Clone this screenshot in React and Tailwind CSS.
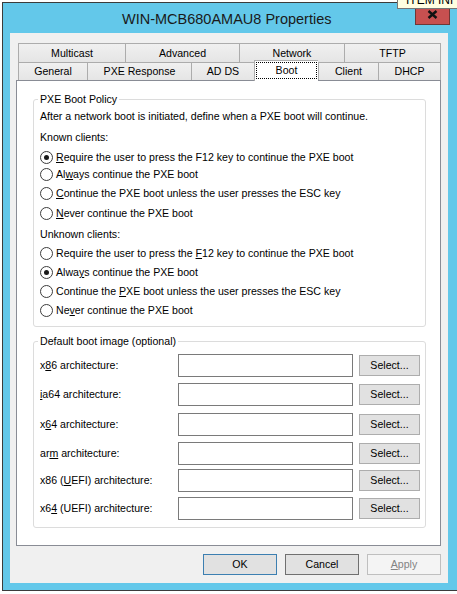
function Radio({ checked }) {
  return (
    <span className="w-[13px] h-[13px] shrink-0 rounded-full border border-[#3c3c3c] bg-white flex items-center justify-center">
      {checked && <span className="w-[5px] h-[5px] rounded-full bg-[#1a1a1a]" />}
    </span>
  );
}

function RadioRow({ checked, className, children }) {
  return (
    <div className={`h-[17px] flex items-center gap-[3px] ${className}`}>
      <Radio checked={checked} />
      <span>{children}</span>
    </div>
  );
}

function Tab({ w, last, children }) {
  return (
    <div
      className={`${w} h-full border-l border-t border-[#acacac] ${last ? 'border-r' : ''} bg-gradient-to-b from-[#f0f0f0] to-[#e5e5e5] flex items-center justify-center`}
    >
      {children}
    </div>
  );
}

function ImageRow({ className, children }) {
  return (
    <div className={`h-[23px] flex items-center ${className}`}>
      <div className="w-[144px] pl-[6px]">{children}</div>
      <div className="w-[175px] h-[23px] border border-[#7a7a7a] bg-white" />
      <button className="ml-[6px] w-[61px] h-[21px] border border-[#adadad] bg-[#e1e1e1] flex items-center justify-center">
        Select...
      </button>
    </div>
  );
}

export default function App() {
  return (
    <div className="relative w-[457px] h-[594px] overflow-hidden bg-white font-['Liberation_Sans',Arial,sans-serif] text-[10.6px] leading-none text-black">
      <div className="ml-[2px] mt-[2px] w-[470px] h-[589px] border border-[#3b3b3b] bg-[#63c8ea] flex flex-col">
        {/* title bar */}
        <div className="relative h-[30px] shrink-0 flex items-center">
          <span className="ml-[119px] pt-[2px] text-[14.5px] text-[#1a1a1a]">WIN-MCB680AMAU8 Properties</span>
          <div className="absolute top-[-1px] left-[412px] w-[35px] h-[23px] bg-[#c75050] border border-[#6e3737] flex items-center justify-center">
            <svg width="11" height="9" viewBox="0 0 11 9" className="mt-[1px]">
              <path d="M1.5 1 L9.5 8 M9.5 1 L1.5 8" stroke="#111" strokeWidth="2.4" fill="none" />
            </svg>
          </div>
        </div>

        {/* client area */}
        <div className="ml-[7px] mb-[7px] w-[438px] flex-1 bg-[#f0f0f0] flex flex-col pt-[10px] pl-[6px]">
          <div className="ml-[2px] h-[19px] flex">
            <Tab w="w-[107px]">Multicast</Tab>
            <Tab w="w-[114px]">Advanced</Tab>
            <Tab w="w-[105px]">Network</Tab>
            <Tab w="w-[97px]" last>TFTP</Tab>
          </div>
          <div className="ml-[2px] h-[18px] flex">
            <Tab w="w-[69px]">General</Tab>
            <Tab w="w-[104px]">PXE Response</Tab>
            <Tab w="w-[63px]">AD DS</Tab>
            <div className="relative z-10 self-start w-[64px] h-[21px] mt-[-2px] mb-[-1px] border-l border-t border-[#acacac] bg-white px-[1px]">
              <div className="h-[17px] mt-[1px] border border-dotted border-black flex items-center justify-center">
                Boot
              </div>
            </div>
            <Tab w="w-[60px]">Client</Tab>
            <div className="w-[63px] h-full border-l border-t border-r border-[#acacac] bg-gradient-to-b from-[#f0f0f0] to-[#e5e5e5] flex items-center justify-center">
              DHCP
            </div>
          </div>

          {/* tab page */}
          <div className="w-[425px] h-[466px] border border-[#898c95] bg-white flex flex-col pl-[16px]">
            <div className="relative mt-[18px] w-[393px] h-[228px] shrink-0 border border-[#dcdcdc] rounded-[3px] pt-[8px] pl-[6px]">
              <span className="absolute left-[4px] top-[-7px] h-[13px] px-[2px] bg-white flex items-center">PXE Boot Policy</span>
              <div className="h-[17px] flex items-center">After a network boot is initiated, define when a PXE boot will continue.</div>
              <div className="h-[17px] mt-[4px] flex items-center">Known clients:</div>
              <RadioRow checked className="mt-[3px]">
                <u>R</u>equire the user to press the F12 key to continue the PXE boot
              </RadioRow>
              <RadioRow className="mt-[0px]">
                Al<u>w</u>ays continue the PXE boot
              </RadioRow>
              <RadioRow className="mt-[2px]">
                <u>C</u>ontinue the PXE boot unless the user presses the ESC key
              </RadioRow>
              <RadioRow className="mt-[3px]">
                <u>N</u>ever continue the PXE boot
              </RadioRow>
              <div className="h-[17px] mt-[4px] flex items-center">Unknown clients:</div>
              <RadioRow className="mt-[2px]">
                Require the user to press the <u>F</u>12 key to continue the PXE boot
              </RadioRow>
              <RadioRow checked className="mt-[2px]">
                Alwa<u>y</u>s continue the PXE boot
              </RadioRow>
              <RadioRow className="mt-[2px]">
                Continue the <u>P</u>XE boot unless the user presses the ESC key
              </RadioRow>
              <RadioRow className="mt-[2px]">
                Ne<u>v</u>er continue the PXE boot
              </RadioRow>
            </div>

            <div className="relative mt-[14px] w-[393px] h-[187px] shrink-0 border border-[#dcdcdc] rounded-[3px] pt-[12px]">
              <span className="absolute left-[4px] top-[-7px] h-[13px] px-[2px] bg-white flex items-center">Default boot image (optional)</span>
              <ImageRow>
                x<u>8</u>6 architecture:
              </ImageRow>
              <ImageRow className="mt-[6px]">
                <u>i</u>a64 architecture:
              </ImageRow>
              <ImageRow className="mt-[7px]">
                x<u>6</u>4 architecture:
              </ImageRow>
              <ImageRow className="mt-[6px]">
                ar<u>m</u> architecture:
              </ImageRow>
              <ImageRow className="mt-[4px]">
                x86 (<u>U</u>EFI) architecture:
              </ImageRow>
              <ImageRow className="mt-[5px]">
                x6<u>4</u> (UEFI) architecture:
              </ImageRow>
            </div>
          </div>

          {/* dialog buttons */}
          <div className="mt-[8px] w-[425px] flex justify-end gap-[8px]">
            <button className="w-[74px] h-[21px] border border-[#3c7fb1] bg-[#e1e1e1] flex items-center justify-center">OK</button>
            <button className="w-[74px] h-[21px] border border-[#707070] bg-[#e1e1e1] flex items-center justify-center">Cancel</button>
            <button className="w-[74px] h-[21px] border border-[#bfbfbf] bg-[#f4f4f4] text-[#838383] flex items-center justify-center">
              <span><u>A</u>pply</span>
            </button>
          </div>
        </div>
      </div>

      {/* tooltip peeking over the title bar, mostly off-screen */}
      <div className="absolute left-[397px] top-0 w-[70px] h-[9px] bg-[#ffffe1] border-l border-b border-[#767676] overflow-hidden">
        <div className="mt-[-7px] ml-[8px] text-[12px] leading-[14px] text-black whitespace-nowrap">ITEM INFO</div>
      </div>
    </div>
  );
}
